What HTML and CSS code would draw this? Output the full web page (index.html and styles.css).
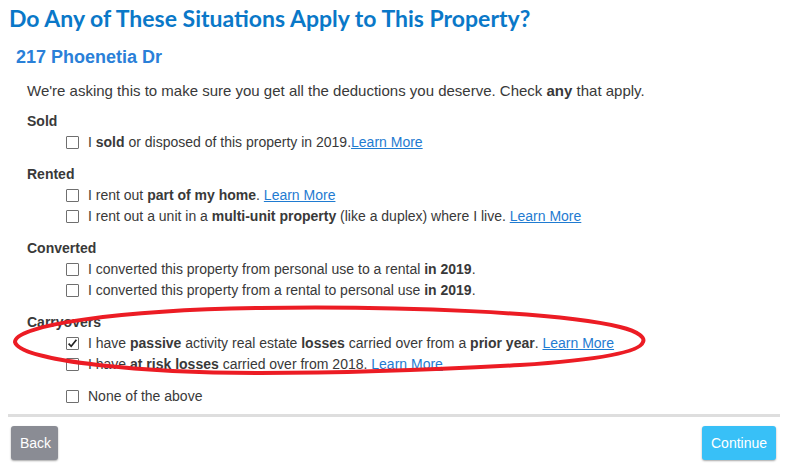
FILE: index.html
```html
<!DOCTYPE html>
<html lang="en">
<head>
<meta charset="utf-8">
<title>Do Any of These Situations Apply to This Property?</title>
<link rel="stylesheet" href="styles.css">
</head>
<body>
<div class="page">
  <h1 class="title">Do Any of These Situations Apply to This Property?</h1>
  <h2 class="subtitle">217 Phoenetia Dr</h2>
  <p class="intro">We're asking this to make sure you get all the deductions you deserve. Check <b>any</b> that apply.</p>

  <div class="groups">
    <div class="group">
      <div class="group-title">Sold</div>
      <div class="option"><span class="box"></span><span>I <b>sold</b> or disposed of this property in 2019.<a href="#">Learn More</a></span></div>
    </div>
    <div class="group">
      <div class="group-title">Rented</div>
      <div class="option"><span class="box"></span><span>I rent out <b>part of my home</b>. <a href="#">Learn More</a></span></div>
      <div class="option"><span class="box"></span><span>I rent out a unit in a <b>multi-unit property</b> (like a duplex) where I live. <a href="#">Learn More</a></span></div>
    </div>
    <div class="group">
      <div class="group-title">Converted</div>
      <div class="option"><span class="box"></span><span>I converted this property from personal use to a rental <b>in 2019</b>.</span></div>
      <div class="option"><span class="box"></span><span>I converted this property from a rental to personal use <b>in 2019</b>.</span></div>
    </div>
    <div class="group">
      <div class="group-title">Carryovers</div>
      <div class="option"><span class="box checked"><svg viewBox="0 0 13 13" width="13" height="13"><path d="M2.6 6.6 L5.2 9.3 L10.4 2.8" fill="none" stroke="#222" stroke-width="1.7"/></svg></span><span>I have <b>passive</b> activity real estate <b>losses</b> carried over from a <b>prior year</b>. <a href="#">Learn More</a></span></div>
      <div class="option"><span class="box"></span><span>I have <b>at risk losses</b> carried over from 2018. <a href="#">Learn More</a></span></div>
    </div>
    <div class="group">
      <div class="option"><span class="box"></span><span>None of the above</span></div>
    </div>
  </div>

  <div class="footer">
    <button class="btn btn-back">Back</button>
    <button class="btn btn-continue">Continue</button>
  </div>

  <svg class="annotation" viewBox="0 0 790 474" width="790" height="474">
    <path d="M15,342 C15,325 120,310 260,308 C400,306 560,312 620,327 C640,332 645,338 643,342 C640,352 600,360 520,365 C430,370 330,373 260,373 C150,373 20,362 15,342 Z" fill="none" stroke="#ec1c24" stroke-width="4"/>
  </svg>
</div>
</body>
</html>
```

FILE: styles.css
```css
html, body {
  margin: 0;
  padding: 0;
  background: #ffffff;
}

.page {
  position: relative;
  width: 790px;
  height: 474px;
  overflow: hidden;
  font-family: "Liberation Sans", Arial, sans-serif;
  color: #393939;
}

.title {
  margin: 0;
  padding: 3px 0 0 9px;
  font-family: Lato, "Open Sans", sans-serif;
  font-weight: 700;
  font-size: 23px;
  line-height: 30px;
  color: #0a78c8;
}

.subtitle {
  margin: 12px 0 0 16px;
  font-size: 18px;
  line-height: 24px;
  font-weight: 700;
  color: #2a80d8;
}

.intro {
  margin: 11px 0 0 27px;
  font-size: 15px;
  line-height: 21px;
}

.groups {
  display: flex;
  flex-direction: column;
  gap: 11px;
  margin-top: 10px;
  padding-left: 27px;
}

.group {
  display: flex;
  flex-direction: column;
}

.group-title {
  font-size: 14px;
  font-weight: 700;
  line-height: 21px;
}

.option {
  display: flex;
  align-items: center;
  gap: 9px;
  margin-left: 39px;
  font-size: 14px;
  line-height: 21px;
}

.box {
  box-sizing: border-box;
  width: 13px;
  height: 13px;
  border: 1px solid #6f6f6f;
  border-radius: 1px;
  background: #fff;
  flex: none;
  display: flex;
  align-items: center;
  justify-content: center;
}

.box svg {
  display: block;
  margin: -1px;
}

a {
  color: #1f7bd1;
  text-decoration: underline;
}

.footer {
  margin: 7px 10px 0 8px;
  padding: 9px 4px 0 3px;
  border-top: 3px solid #dedede;
  display: flex;
  justify-content: space-between;
}

.btn {
  height: 34px;
  border: none;
  border-radius: 3px;
  font-family: "Liberation Sans", Arial, sans-serif;
  font-size: 14px;
  color: #ffffff;
  padding: 0 9px;
  box-shadow: 0 1px 2px rgba(0, 0, 0, 0.35);
}

.btn-back {
  width: 47px;
  background: #8a8c94;
}

.btn-continue {
  width: 74px;
  background: #38c0f7;
}

.annotation {
  position: absolute;
  left: 0;
  top: 0;
  pointer-events: none;
}
```
